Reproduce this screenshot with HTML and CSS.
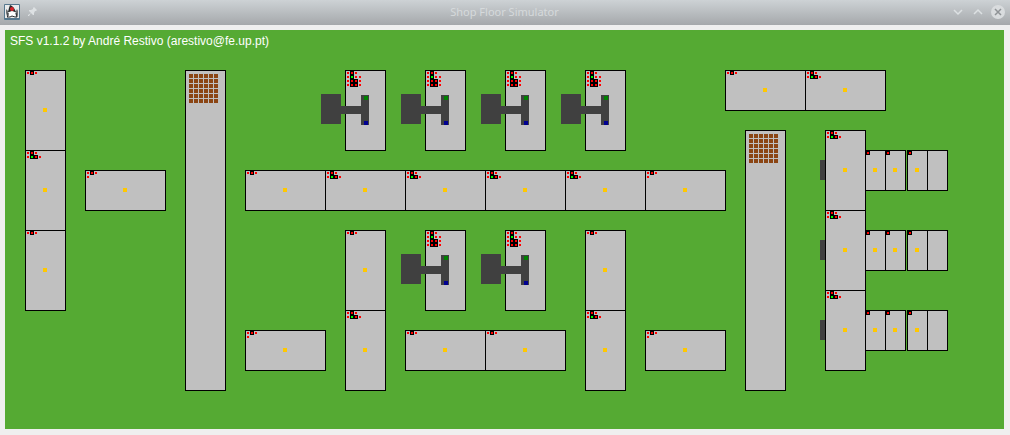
FILE: index.html
```html
<!DOCTYPE html>
<html lang="en">
<head>
<meta charset="utf-8">
<title>Shop Floor Simulator</title>
<link rel="stylesheet" href="styles.css">
</head>
<body>
<header class="titlebar">
  <div class="titlebar-side">
    <svg class="app-icon" viewBox="0 0 16 16" aria-hidden="true">
      <rect class="app-frame" width="16" height="16" rx="1"/>
      <rect class="app-face" x="1" y="1" width="14" height="13"/>
      <path class="duke-arm" d="M2 5l2 2 1 5H3L2 9zM13 5l1 2v4l-1 2-2-1 1-5z"/>
      <path class="duke-head" d="M6 1l2 1 2 2 2 4H4l1-4z"/>
      <path class="duke-body" d="M5 8l3-1 3 1 1 4-2 1-2-1-3 1-1-1z"/>
      <path class="duke-line" d="M4 9v3l-1 1h3l2-1 3 1h2l-1-4"/>
      <circle class="duke-nose" cx="8" cy="5" r="2"/>
    </svg>
    <button class="tool" type="button" aria-label="Keep on top">
      <svg class="glyph" viewBox="0 0 10 10" aria-hidden="true"><path class="pin" d="M6 0l3 3-1 1-1 0-1 2 0 2-1 0-2-2-2 3-1 0 0-1 3-2-2-2 0-1 2 0 2-1 0-1z"/></svg>
    </button>
  </div>
  <h1 class="title">Shop Floor Simulator</h1>
  <div class="titlebar-side titlebar-end">
    <button class="tool" type="button" aria-label="Minimize">
      <svg class="glyph" viewBox="0 0 10 10" aria-hidden="true"><path class="chevron" d="M1 3l4 4 4-4"/></svg>
    </button>
    <button class="tool" type="button" aria-label="Maximize">
      <svg class="glyph" viewBox="0 0 10 10" aria-hidden="true"><path class="chevron" d="M1 7l4-4 4 4"/></svg>
    </button>
    <button class="tool tool-close" type="button" aria-label="Close">
      <svg class="glyph-close" viewBox="0 0 14 14" aria-hidden="true"><circle class="close-disc" cx="7" cy="7" r="7"/><path class="close-cross" d="M4 4l6 6M10 4l-6 6"/></svg>
    </button>
  </div>
</header>
<main class="floor">
  <p class="credit">SFS v1.1.2 by André Restivo (arestivo@fe.up.pt)</p>
  <svg class="plant" viewBox="5 30 999 399" preserveAspectRatio="xMinYMin meet" role="img" aria-label="Plant layout">
    <defs>
      <pattern id="crates" x="4" y="4" width="5" height="5" patternUnits="userSpaceOnUse"><rect class="crate" width="4" height="4"/></pattern>
      <g id="sensors-line"><path class="black" d="M5 1h4v4h-4z"/><path class="red" d="M2 2h2v2h-2zM6 2h2v2h-2zM10 2h2v2h-2z"/></g>
      <g id="sensors-end"><use href="#sensors-line"/><path class="red" d="M2 6h2v2h-2z"/></g>
      <g id="sensors-turn"><use href="#sensors-line"/><path class="black" d="M5 5h8v4h-8z"/><path class="red" d="M2 6h2v2h-2zM10 6h2v2h-2zM14 6h2v2h-2z"/><path class="lime" d="M6 6h2v2h-2z"/></g>
      <g id="upright"><rect class="black" width="41" height="81"/><rect class="steel" x="1" y="1" width="39" height="79"/></g>
      <g id="flat"><rect class="black" width="81" height="41"/><rect class="steel" x="1" y="1" width="79" height="39"/></g>
      <g id="small"><rect class="black" width="21" height="41"/><rect class="steel" x="1" y="1" width="19" height="39"/></g>
      <g id="v-line"><use href="#upright"/><rect class="amber" x="18" y="38" width="4" height="4"/><use href="#sensors-line"/></g>
      <g id="v-turn"><use href="#upright"/><rect class="amber" x="18" y="38" width="4" height="4"/><use href="#sensors-turn"/></g>
      <g id="h-line"><use href="#flat"/><rect class="amber" x="38" y="18" width="4" height="4"/><use href="#sensors-line"/></g>
      <g id="h-turn"><use href="#flat"/><rect class="amber" x="38" y="18" width="4" height="4"/><use href="#sensors-turn"/></g>
      <g id="h-end"><use href="#flat"/><rect class="amber" x="38" y="18" width="4" height="4"/><use href="#sensors-end"/></g>
      <g id="roller"><use href="#small"/><rect class="amber" x="8" y="18" width="4" height="4"/><rect class="black" x="1" y="1" width="4" height="4"/><rect class="red" x="2" y="2" width="2" height="2"/></g>
      <g id="machine">
        <use href="#upright"/>
        <path class="black" d="M5 1h4v8h4v8h-8z"/>
        <path class="red" d="M2 2h2v2h-2zM6 2h2v2h-2zM10 2h2v2h-2zM2 6h2v2h-2zM10 6h2v2h-2zM14 6h2v2h-2zM2 10h2v2h-2zM6 10h2v2h-2zM10 10h2v2h-2zM14 10h2v2h-2zM2 14h2v2h-2zM6 14h2v2h-2zM10 14h2v2h-2zM14 14h2v2h-2z"/>
        <rect class="lime" x="6" y="6" width="2" height="2"/>
        <path class="iron" d="M-24 24h20v12h20v-11h8v30h-8v-11h-20v10h-20z"/>
        <rect class="green" x="19" y="26" width="4" height="4"/>
        <rect class="navy" x="19" y="51" width="4" height="4"/>
      </g>
      <g id="unloader">
        <rect class="iron" x="-5" y="30" width="5" height="20"/>
        <use href="#v-turn"/>
        <use href="#roller" x="40" y="20"/><use href="#roller" x="60" y="20"/>
        <use href="#roller" x="82" y="20"/><use href="#small" x="102" y="20"/>
      </g>
    </defs>

    <use href="#v-line" x="25" y="70"/><use href="#v-turn" x="25" y="150"/><use href="#v-line" x="25" y="230"/>
    <use href="#h-end" x="85" y="170"/>

    <g transform="translate(185 70)"><rect class="black" width="41" height="321"/><rect class="steel" x="1" y="1" width="39" height="319"/><rect fill="url(#crates)" x="4" y="4" width="30" height="30"/></g>
    <g transform="translate(745 130)"><rect class="black" width="41" height="261"/><rect class="steel" x="1" y="1" width="39" height="259"/><rect fill="url(#crates)" x="4" y="4" width="30" height="30"/></g>

    <use href="#machine" x="345" y="70"/><use href="#machine" x="425" y="70"/><use href="#machine" x="505" y="70"/><use href="#machine" x="585" y="70"/>
    <use href="#machine" x="425" y="230"/><use href="#machine" x="505" y="230"/>

    <use href="#h-line" x="245" y="170"/><use href="#h-turn" x="325" y="170"/><use href="#h-turn" x="405" y="170"/>
    <use href="#h-turn" x="485" y="170"/><use href="#h-turn" x="565" y="170"/><use href="#h-end" x="645" y="170"/>

    <use href="#v-line" x="345" y="230"/><use href="#v-turn" x="345" y="310"/>
    <use href="#v-line" x="585" y="230"/><use href="#v-turn" x="585" y="310"/>

    <use href="#h-end" x="245" y="330"/><use href="#h-line" x="405" y="330"/><use href="#h-line" x="485" y="330"/><use href="#h-end" x="645" y="330"/>

    <use href="#h-line" x="725" y="70"/><use href="#h-turn" x="805" y="70"/>

    <use href="#unloader" x="825" y="130"/><use href="#unloader" x="825" y="210"/><use href="#unloader" x="825" y="290"/>
  </svg>
</main>
</body>
</html>
```
FILE: styles.css
```css
* { box-sizing: border-box; }
body {
  margin: 0;
  min-height: 100vh;
  display: flex;
  flex-direction: column;
  background: #efefef;
}
.titlebar {
  display: grid;
  grid-template-columns: 1fr auto 1fr;
  align-items: center;
  height: 25px;
  padding: 0 5px 1px 4px;
  background: linear-gradient(#cdd2d5, #a5a8ab);
}
.titlebar-side { display: flex; align-items: center; gap: 6px; }
.titlebar-end { justify-content: flex-end; }
.title {
  margin: 0;
  font: 400 11px/16px "Noto Sans", sans-serif;
  color: #d6dadc;
}
.tool {
  display: flex;
  align-items: center;
  justify-content: center;
  width: 14px;
  height: 16px;
  padding: 0;
  border: 0;
  background: none;
}
.glyph { width: 10px; height: 10px; }
.glyph-close { width: 14px; height: 14px; }
.pin { fill: #dde1e3; }
.chevron { fill: none; stroke: #dde1e3; stroke-width: 1.5; }
.close-disc { fill: #d9dcde; }
.close-cross { fill: none; stroke: #8f9396; stroke-width: 1.5; }

.app-icon { width: 16px; height: 16px; }
.app-frame { fill: #56788e; }
.app-face { fill: #e9ebec; }
.duke-arm { fill: #6d7173; }
.duke-head { fill: #25282a; }
.duke-body { fill: #ffffff; }
.duke-line { fill: none; stroke: #2c2f31; stroke-width: 1; }
.duke-nose { fill: #d8232a; }

.floor {
  flex: 1;
  display: grid;
  grid-template: 1fr / 1fr;
  margin: 5px 6px 6px 5px;
  background: #55aa33;
}
.credit, .plant { grid-area: 1 / 1; }
.credit {
  margin: 0;
  padding: 4px 5px;
  font: 12px/14px "Liberation Sans", Arial, sans-serif;
  color: #ffffff;
}
.plant {
  display: block;
  width: 100%;
  shape-rendering: crispEdges;
}
.black { fill: #000000; }
.steel { fill: #c0c0c0; }
.iron { fill: #404040; }
.amber { fill: #ffc800; }
.red { fill: #ff0000; }
.lime { fill: #00ff00; }
.green { fill: #008000; }
.navy { fill: #000090; }
.crate { fill: #8b4513; }
```
